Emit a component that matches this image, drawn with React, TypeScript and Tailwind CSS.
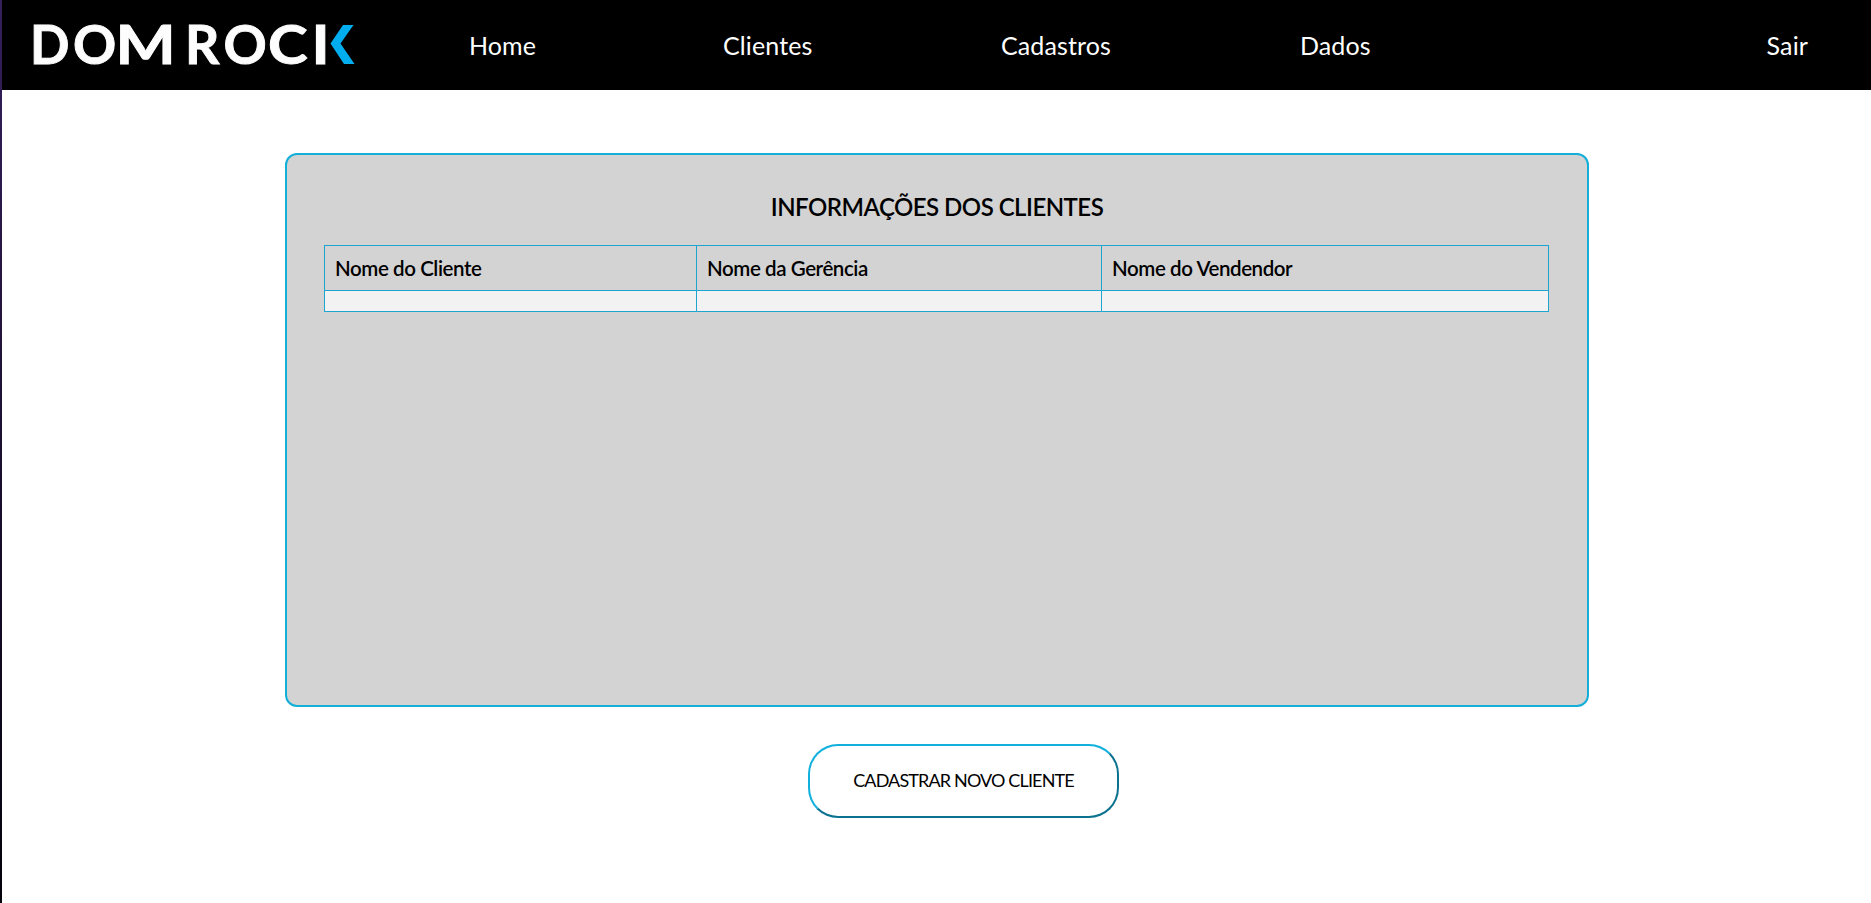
const columns = ['Nome do Cliente', 'Nome da Gerência', 'Nome do Vendendor'];

const logoLetters = [
  { char: 'D', x: 30, scale: 0.97 },
  { char: 'O', x: 73, scale: 1 },
  { char: 'M', x: 115.5, scale: 1.19 },
  { char: 'R', x: 185, scale: 1 },
  { char: 'O', x: 223.5, scale: 1 },
  { char: 'C', x: 268, scale: 1.12 },
  { char: 'I', x: 311.5, scale: 1.15 },
];

function Logo() {
  return (
    <svg width="360" height="90" viewBox="0 0 360 90" className="block shrink-0" role="img" aria-label="DOM ROCK">
      <g fill="#fdfdfd" stroke="#fdfdfd" strokeWidth="0.9" fontFamily="Lato, sans-serif" fontWeight="700" fontSize="53.5">
        {logoLetters.map((l, i) => (
          <text key={i} transform={`translate(${l.x} 63.500) scale(${l.scale} 1)`}>
            {l.char}
          </text>
        ))}
      </g>
      <path d="M343 25h10.5L340.5 43.5 354.5 64H344L330.500 43.500z" fill="#00aeef" />
    </svg>
  );
}

function Header() {
  return (
    <header className="flex h-[90px] items-center bg-black text-[25px] leading-none tracking-[0.12px] text-white">
      <div className="-ml-0.5 w-[469px]">
        <Logo />
      </div>
      <nav className="flex flex-1 items-center pt-px">
        <a className="w-[254px]">Home</a>
        <a className="w-[278px]">Clientes</a>
        <a className="w-[299px]">Cadastros</a>
        <a>Dados</a>
        <a className="mr-[63px] ml-auto">Sair</a>
      </nav>
    </header>
  );
}

export default function App() {
  return (
    <div className="flex h-[903px] w-[1871px] overflow-hidden bg-white font-['Lato',sans-serif] text-black">
      <div className="w-0.5 shrink-0 bg-linear-to-b from-[#35205c] to-[#05030c]" />
      <div className="flex-1">
        <Header />
        <main className="flex flex-col">
          <section className="mt-[63px] ml-[283px] h-[554px] w-[1304px] rounded-[12px] border-2 border-[#13afd8] bg-[#d3d3d3] px-[37px] pt-[36px]">
            <h1 className="text-center text-[24px] leading-[32px] font-semibold tracking-[-0.52px]">INFORMAÇÕES DOS CLIENTES</h1>
            <table className="mt-[22px] w-[1225px] table-fixed border-collapse text-left text-[20.5px] tracking-[-0.42px]">
              <colgroup>
                <col className="w-[372px]" />
                <col className="w-[405px]" />
                <col />
              </colgroup>
              <thead>
                <tr className="h-[45px]">
                  {columns.map((c) => (
                    <th key={c} className="border border-[#1da5cf] px-[10px] py-0 leading-none font-semibold">
                      {c}
                    </th>
                  ))}
                </tr>
              </thead>
              <tbody>
                <tr className="h-[21px] bg-[#f2f2f2]">
                  {columns.map((c) => (
                    <td key={c} className="border border-[#1da5cf] p-0" />
                  ))}
                </tr>
              </tbody>
            </table>
          </section>
          <button className="mt-[37px] ml-[806px] h-[74px] w-[311px] rounded-[30px] border-2 border-t-[#12b0dc] border-r-[#0b7290] border-b-[#0b7290] border-l-[#12b0dc] bg-white pb-[2px] text-[18px] tracking-[-0.86px]">
            CADASTRAR NOVO CLIENTE
          </button>
        </main>
      </div>
    </div>
  );
}
